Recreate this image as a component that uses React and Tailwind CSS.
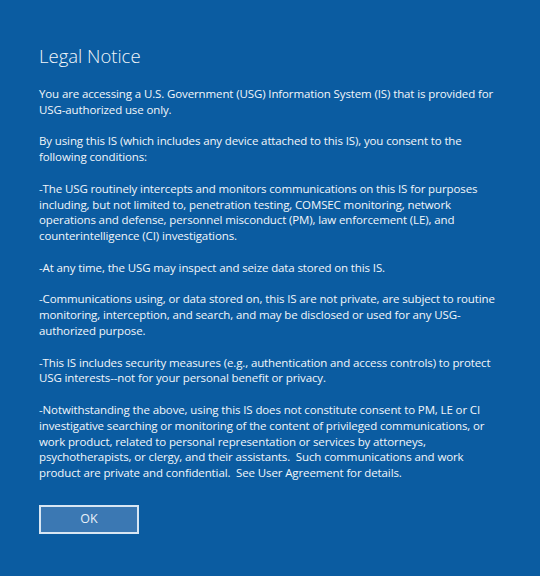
import React from "react";

const paragraphs = [
  [
    "You are accessing a U.S. Government (USG) Information System (IS) that is provided for",
    "USG-authorized use only.",
  ],
  [
    "By using this IS (which includes any device attached to this IS), you consent to the",
    "following conditions:",
  ],
  [
    "-The USG routinely intercepts and monitors communications on this IS for purposes",
    "including, but not limited to, penetration testing, COMSEC monitoring, network",
    "operations and defense, personnel misconduct (PM), law enforcement (LE), and",
    "counterintelligence (CI) investigations.",
  ],
  ["-At any time, the USG may inspect and seize data stored on this IS."],
  [
    "-Communications using, or data stored on, this IS are not private, are subject to routine",
    "monitoring, interception, and search, and may be disclosed or used for any USG-",
    "authorized purpose.",
  ],
  [
    "-This IS includes security measures (e.g., authentication and access controls) to protect",
    "USG interests--not for your personal benefit or privacy.",
  ],
  [
    "-Notwithstanding the above, using this IS does not constitute consent to PM, LE or CI",
    "investigative searching or monitoring of the content of privileged communications, or",
    "work product, related to personal representation or services by attorneys,",
    "psychotherapists, or clergy, and their assistants.  Such communications and work",
    "product are private and confidential.  See User Agreement for details.",
  ],
];

export default function App() {
  return (
    <div
      className="w-[540px] h-[576px] bg-[#0b5ca1] text-[#f2f6fa] overflow-hidden pl-[39px] pt-[44px]"
      style={{ fontFamily: '"Open Sans", "Noto Sans", sans-serif' }}
    >
      <h1 className="text-[18.5px] font-light leading-[24px] mb-[18px]">Legal Notice</h1>
      <div className="flex flex-col gap-[15.8px]">
        {paragraphs.map((lines, i) => (
          <div key={i} className="flex flex-col">
            {lines.map((l, j) => (
              <div key={j} className="whitespace-pre text-[11.5px] tracking-[-0.12px] leading-[15.8px]">
                {l}
              </div>
            ))}
          </div>
        ))}
      </div>
      <button className="mt-[24px] w-[100px] h-[29px] border-2 border-[#d8e6f3] bg-[#3b78b3] text-[12.5px] text-[#e8f0f8] flex items-center justify-center">
        OK
      </button>
    </div>
  );
}
